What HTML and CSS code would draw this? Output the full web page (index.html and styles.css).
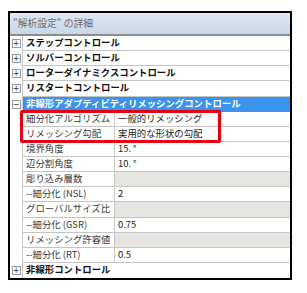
FILE: index.html
```html
<!DOCTYPE html>
<html lang="ja">
<head>
<meta charset="utf-8">
<link rel="stylesheet" href="styles.css">
</head>
<body>
<div class="frame">
  <div class="title">"解析設定" の詳細</div>
  <div class="row group"><div class="gut"><span class="box">+</span></div><div class="gname">ステップコントロール</div></div>
  <div class="row group"><div class="gut"><span class="box">+</span></div><div class="gname">ソルバーコントロール</div></div>
  <div class="row group"><div class="gut"><span class="box">+</span></div><div class="gname">ローターダイナミクスコントロール</div></div>
  <div class="row group"><div class="gut"><span class="box">+</span></div><div class="gname">リスタートコントロール</div></div>
  <div class="row group open"><div class="gut"><span class="box">−</span></div><div class="gname">非線形アダプティビティリメッシングコントロール</div></div>
  <div class="row prop"><div class="gut"></div><div class="name">細分化アルゴリズム</div><div class="val">一般的リメッシング</div></div>
  <div class="row prop"><div class="gut"></div><div class="name">リメッシング勾配</div><div class="val">実用的な形状の勾配</div></div>
  <div class="row prop"><div class="gut"></div><div class="name">境界角度</div><div class="val">15. °</div></div>
  <div class="row prop"><div class="gut"></div><div class="name">辺分割角度</div><div class="val">10. °</div></div>
  <div class="row prop cat"><div class="gut"></div><div class="name">彫り込み層数</div><div class="val"></div></div>
  <div class="row prop"><div class="gut"></div><div class="name">--細分化 (NSL)</div><div class="val">2</div></div>
  <div class="row prop cat"><div class="gut"></div><div class="name">グローバルサイズ比</div><div class="val"></div></div>
  <div class="row prop"><div class="gut"></div><div class="name">--細分化 (GSR)</div><div class="val">0.75</div></div>
  <div class="row prop cat"><div class="gut"></div><div class="name">リメッシング許容値</div><div class="val"></div></div>
  <div class="row prop"><div class="gut"></div><div class="name">--細分化 (RT)</div><div class="val">0.5</div></div>
  <div class="row group last"><div class="gut"><span class="box">+</span></div><div class="gname">非線形コントロール</div></div>
  <div class="highlight"></div>
</div>
</body>
</html>
```
FILE: styles.css
```css
html, body { margin: 0; padding: 0; background: #fff; }
body { font-family: "Noto Sans CJK JP", "Noto Sans", sans-serif; }
.frame {
  position: relative;
  margin: 11px 0 0 8px;
  width: 280px;
  border: 2px solid #000;
  background: #fff;
}
.title {
  height: 21px;
  line-height: 21px;
  padding-left: 3px;
  font-size: 9.8px;
  color: #6a6a6a;
  background: linear-gradient(#dde7f1, #c9d7e5);
  border-bottom: 2px solid #8c8c8c;
  white-space: nowrap;
}
.row {
  display: grid;
  grid-template-columns: 13px 92px 1fr;
  height: 15.125px;
  box-sizing: border-box;
  font-size: 9.4px;
  line-height: 13.5px;
  white-space: nowrap;
  overflow: hidden;
}
.gut {
  background: #fff;
  border-right: 1px solid #c8c8c8;
  display: flex;
  align-items: center;
  justify-content: center;
}
.box {
  width: 7px;
  height: 7px;
  border: 1px solid #9a9a9a;
  font-size: 8px;
  line-height: 7px;
  text-align: center;
  color: #333;
  font-family: "DejaVu Sans", sans-serif;
  display: block;
}
.gname {
  grid-column: 2 / 4;
  padding-left: 3px;
  font-weight: bold;
  color: #111;
  border-bottom: 1px solid #c4c4c4;
}
.open .gname {
  background: #3a93ee;
  color: #fff;
  border-bottom: 1px solid #3a93ee;
}
.last .gname { border-bottom: none; }
.name {
  padding-left: 3px;
  color: #3a3a3a;
  border-bottom: 1px solid #c4c4c4;
  border-right: 1px solid #c8c8c8;
}
.val {
  padding-left: 3px;
  color: #222;
  border-bottom: 1px solid #c4c4c4;
}
.cat .val { background: #e6e5e1; }
.highlight {
  position: absolute;
  left: 10px;
  top: 97px;
  width: 201px;
  height: 33px;
  box-sizing: border-box;
  border: 3px solid #e60012;
  border-radius: 2px;
}
```
